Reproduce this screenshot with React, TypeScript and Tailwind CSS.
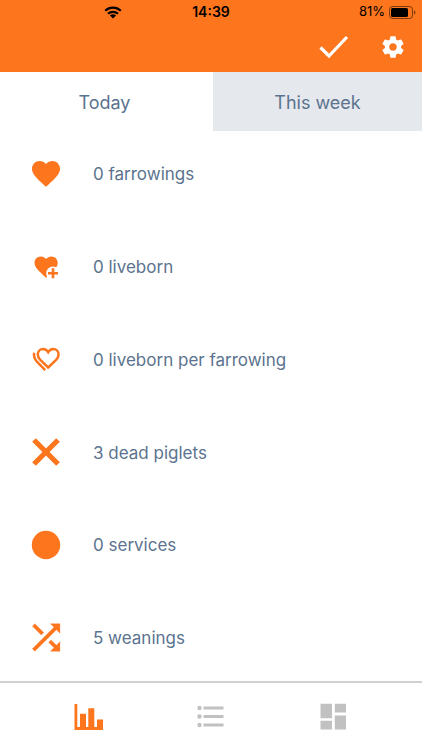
import React, { useState } from "react";

const HEART =
  "M12 21.35l-1.45-1.32C5.4 15.36 2 12.28 2 8.5 2 5.42 4.42 3 7.5 3c1.74 0 3.41.81 4.5 2.09C13.09 3.81 14.76 3 16.5 3 19.58 3 22 5.42 22 8.5c0 3.78-3.4 6.86-8.55 11.54L12 21.35z";

type IconProps = { viewBox?: string; children: React.ReactNode };

function Icon({ viewBox = "0 0 32 32", children }: IconProps) {
  return (
    <svg viewBox={viewBox} className="size-8 shrink-0" fill="currentColor" aria-hidden="true">
      {children}
    </svg>
  );
}

const stats = [
  {
    label: "0 farrowings",
    icon: (
      <Icon viewBox="0.6 0.8 22.8 22.8">
        <path d={HEART} />
      </Icon>
    ),
  },
  {
    label: "0 liveborn",
    icon: (
      <Icon>
        <path d={HEART} transform="translate(2.2 2) scale(1.16)" />
        <circle cx="23" cy="22.3" r="6.8" fill="white" />
        <path d="M23 17.3v10M18 22.3h10" stroke="currentColor" strokeWidth="2.6" />
      </Icon>
    ),
  },
  {
    label: "0 liveborn per farrowing",
    icon: (
      <Icon>
        <g fill="none" stroke="currentColor" strokeWidth="2.5">
          <path d="M18.200 23.500L10.300 15.800C8.700 14.100 7.800 12.500 7.800 10.500c0-3.200 2.300-5.600 5.300-5.600 2.100 0 4 1.200 5.100 3.200 1.100-2 3-3.200 5.100-3.200 3 0 5.300 2.400 5.300 5.600 0 2-.9 3.600-2.500 5.300z" />
          <path d="M4.100 8.800c-.6 3.600.5 6.200 2.800 8.800l8.300 8.600" />
        </g>
      </Icon>
    ),
  },
  {
    label: "3 dead piglets",
    icon: (
      <Icon>
        <path d="M4 4l24 24M28 4L4 28" stroke="currentColor" strokeWidth="5.200" />
      </Icon>
    ),
  },
  {
    label: "0 services",
    icon: (
      <Icon>
        <circle cx="16" cy="16" r="14.2" />
      </Icon>
    ),
  },
  {
    label: "5 weanings",
    icon: (
      <Icon viewBox="2.6 3 18.6 18.6">
        <path
          d="M10.590 9.170L5.410 4 4 5.410l5.170 5.170 1.420-1.410zM14.500 4l2.040 2.040L4 18.590 5.410 20 17.960 7.460 20 9.500V4h-5.500zm.33 9.410l-1.410 1.410 3.130 3.130L14.500 20H20v-5.500l-2.040 2.040-3.130-3.130z"
          stroke="currentColor"
          strokeWidth="0.2"
        />
      </Icon>
    ),
  },
];

const tabs = ["Today", "This week"];

const pages = [
  {
    name: "Statistics",
    icon: (
      <Icon>
        <path d="M1.500 3h2.800v23h25.700v3H1.500zM7 12.700h6V27H7zM15.300 7.200h6V27h-6zM24 18.500h6V27h-6z" />
      </Icon>
    ),
  },
  {
    name: "List",
    icon: (
      <Icon>
        <path d="M8.500 5.500h20v3h-20zM8.500 14h20v3h-20zM8.500 22.500h20v3h-20z" />
        <circle cx="4.500" cy="7" r="2.200" />
        <circle cx="4.500" cy="15.500" r="2.200" />
        <circle cx="4.500" cy="24" r="2.200" />
      </Icon>
    ),
  },
  {
    name: "Dashboard",
    icon: (
      <Icon>
        <path d="M3.500 2.800H15v14.400H3.500zM3.500 19.800H15v8.700H3.500zM17.800 2.800H29v8.700H17.800zM17.800 14.500H29v14H17.800z" />
      </Icon>
    ),
  },
];

export default function App() {
  const [tab, setTab] = useState(0);
  const [page, setPage] = useState(0);

  return (
    <div className="flex min-h-screen flex-col bg-white font-['Inter',sans-serif] text-[17px] text-[#5b738e]">
      <header className="bg-[#fd751d]">
        <div className="grid h-6 grid-cols-3 items-center px-2 text-black">
          <svg viewBox="0 0 18 13" className="ml-24 h-[13px] w-[18px]" fill="none" stroke="currentColor" aria-hidden="true">
            <path d="M1.200 4.800c4.300-4.200 11.300-4.200 15.600 0M4 7.800c2.800-2.700 7.200-2.700 10 0" strokeWidth="2.200" />
            <path d="M5.900 9.500c1.800-1.600 4.400-1.600 6.200 0L9 12.600z" fill="currentColor" stroke="none" />
          </svg>
          <time className="text-center text-sm font-semibold">14:39</time>
          <div className="flex items-center justify-end gap-1 text-[13px]">
            <span>81%</span>
            <svg viewBox="0 0 27 13" className="-mr-0.5 h-[13px] w-[27px]" aria-hidden="true">
              <rect x="0.500" y="0.500" width="23" height="12" rx="3" fill="none" stroke="black" strokeOpacity="0.5" />
              <rect x="2" y="2" width="17" height="9" rx="1.500" fill="black" />
              <path d="M25 4.500c2 .8 2 3.200 0 4z" fill="black" fillOpacity="0.5" />
            </svg>
          </div>
        </div>
        <div className="flex h-12 items-center justify-end gap-[30px] px-4 pb-0.5 text-white">
          <button type="button" aria-label="Confirm">
            <svg viewBox="0 0 32 32" className="size-8" fill="none" stroke="currentColor" strokeWidth="3.200" aria-hidden="true">
              <path d="M2.500 16.500l8.500 8.500L29 6" />
            </svg>
          </button>
          <button type="button" aria-label="Settings">
            <svg viewBox="0 0 24 24" className="size-[26px]" fill="currentColor" aria-hidden="true">
              <path d="M19.430 12.980c.04-.32.07-.64.07-.98s-.03-.66-.07-.98l2.110-1.650c.19-.15.24-.42.12-.64l-2-3.460c-.12-.22-.39-.3-.61-.22l-2.490 1c-.52-.4-1.080-.73-1.690-.98l-.38-2.650C14.460 2.180 14.250 2 14 2h-4c-.25 0-.46.18-.49.42l-.38 2.650c-.61.25-1.170.59-1.690.98l-2.490-1c-.23-.09-.49 0-.61.22l-2 3.460c-.13.22-.07.49.12.64l2.110 1.650c-.04.32-.07.65-.07.98s.03.66.07.98l-2.110 1.650c-.19.15-.24.42-.12.64l2 3.460c.12.22.39.3.61.22l2.490-1c.52.4 1.080.73 1.690.98l.38 2.650c.03.24.24.42.49.42h4c.25 0 .46-.18.49-.42l.38-2.650c.61-.25 1.170-.59 1.690-.98l2.490 1c.23.09.49 0 .61-.22l2-3.460c.12-.22.07-.49-.12-.64l-2.110-1.650zM12 15.500c-1.930 0-3.500-1.570-3.500-3.500s1.570-3.500 3.500-3.500 3.500 1.570 3.500 3.500-1.570 3.500-3.500 3.500z" />
            </svg>
          </button>
        </div>
      </header>

      <div role="tablist" className="flex h-[59px] gap-1 bg-white text-lg">
        {tabs.map((name, i) => (
          <button
            key={name}
            type="button"
            role="tab"
            aria-selected={tab === i}
            onClick={() => setTab(i)}
            className={`flex-1 pt-0.5 ${tab === i ? "bg-white" : "bg-[#e5e8ed]"}`}
          >
            {name}
          </button>
        ))}
      </div>

      <ul className="flex flex-1 flex-col justify-between gap-4 px-[30px] py-[27px]">
        {stats.map(({ label, icon }) => (
          <li key={label} className="flex h-8 items-center gap-[31px]">
            <span className="text-[#fd751d]">{icon}</span>
            <span className="pt-0.5">{label}</span>
          </li>
        ))}
      </ul>

      <nav className="flex h-[69px] items-center justify-around border-t-2 border-[#d0d0d0] px-7">
        {pages.map(({ name, icon }, i) => (
          <button
            key={name}
            type="button"
            aria-label={name}
            onClick={() => setPage(i)}
            className={page === i ? "text-[#fd751d]" : "text-[#c1c1c1]"}
          >
            {icon}
          </button>
        ))}
      </nav>
    </div>
  );
}
